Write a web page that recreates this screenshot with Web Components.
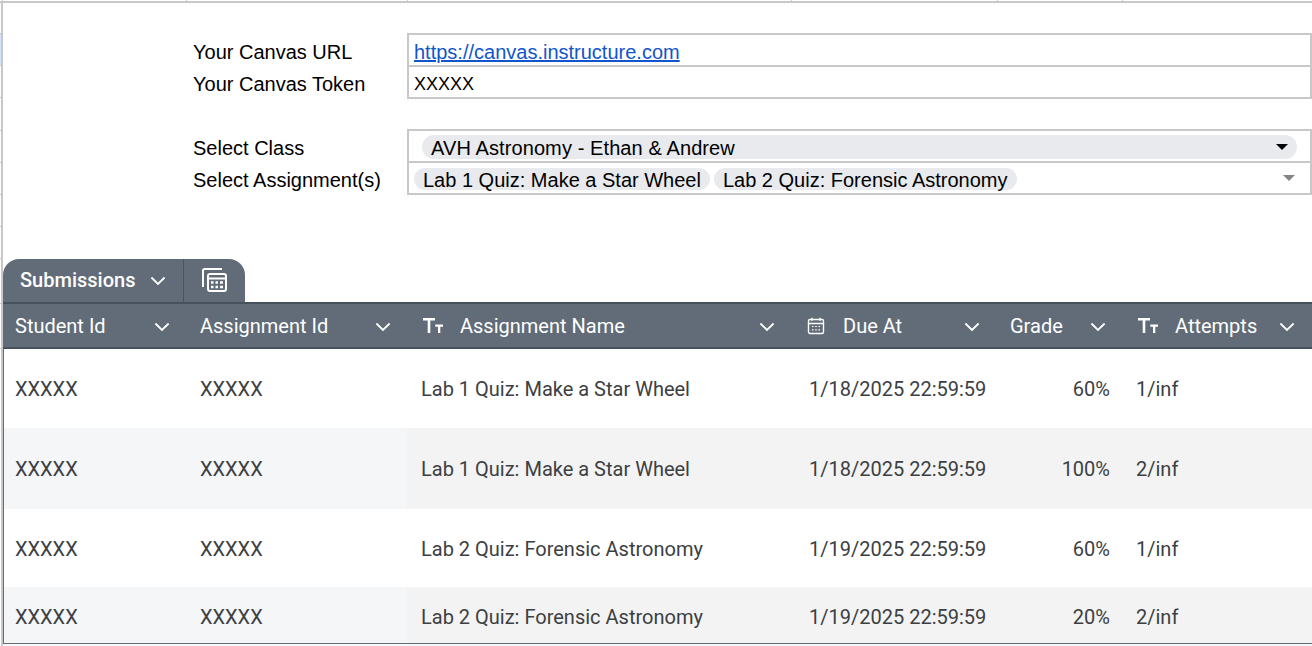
<!DOCTYPE html>
<html>
<head>
<meta charset="utf-8">
<title>Canvas Submissions</title>
<style>
    html, body { margin: 0; height: 100%; background: #fff; overflow: hidden; }
</style>
</head>
<body>
<sheet-page>
    <form-panel></form-panel>
    <submissions-table></submissions-table>
</sheet-page>
<script>
const CHEVRON = `<svg class="chev" width="16" height="14" viewBox="0 0 16 14"><path d="M1.400 3.500 8 10l6.600-6.500" fill="none" stroke="#fff" stroke-width="1.800"/></svg>`;
const TEXT_ICON = `<svg width="22" height="16" viewBox="0 0 22 16"><path d="M1 0h12v2.400H8.300V15H5.700V2.400H1zM13.300 6.500H21v2.200h-2.700V15H16V8.700h-2.700z" fill="#fff"/></svg>`;
const CAL_ICON = `<svg width="18" height="18" viewBox="0 0 18 18" fill="none" stroke="#fff"><rect x="1.500" y="2.500" width="15" height="14" rx="1.500" stroke-width="1.400"/><path d="M1.500 6.500h15M5 .8v3M13 .8v3" stroke-width="1.400"/><path d="M5 9.500h1.600M8.200 9.500h1.600M11.400 9.500H13M5 12.800h1.600M8.200 12.800h1.600M11.400 12.800H13" stroke-width="1.200"/></svg>`;
const TABLE_ICON = `<svg width="26" height="26" viewBox="0 0 26 26" fill="none" stroke="#fff"><path d="M2 20V3.500Q2 2 3.500 2H21" stroke-width="2"/><rect x="7" y="7" width="18" height="17" rx="2" stroke-width="2"/><path d="M7.500 11.500h17" stroke-width="2"/><path d="M10 15.500h2.500M14.500 15.500H17M19 15.500h3M10 20h2.500M14.500 20H17M19 20h3" stroke-width="2.500"/></svg>`;

// row heights of the sheet behind the page, read from the ticks on the left edge
const SHEET_ROWS = [31, 32, 32, 33, 32, 32, 32, 32, 45, 45];

class SheetPage extends HTMLElement {
    constructor() {
        super();
        const shadow = this.attachShadow({ mode: 'open' });
        const ticks = SHEET_ROWS.map((h, i) =>
            `<div class="tick${i === 1 ? ' sel' : ''}" style="height:${h - 1}px"></div>`).join('');
        shadow.innerHTML = `
            <style>
                :host { display: block; height: 646px; overflow: hidden; }
                .ticks { display: grid; grid-template-columns: 3px 184px 221px 384px 206px 125px 1fr; height: 1px; }
                .ticks div { border-right: 1px solid #c8c8c8; }
                .line { height: 2px; background: #c8c8c8; }
                .main { display: grid; grid-template-columns: 1px 2px 1fr; height: 643px; }
                .tick { border-bottom: 1px solid #c8c8c8; }
                .sel { background: #d3e3fd; }
                .rule { background: #c8c8c8; }
                .content { min-width: 0; display: flex; flex-direction: column; }
            </style>
            <div class="ticks"><div></div><div></div><div></div><div></div><div></div><div></div></div>
            <div class="line"></div>
            <div class="main">
                <div>${ticks}</div>
                <div class="rule"></div>
                <div class="content"><slot></slot></div>
            </div>
        `;
    }
}

class FormPanel extends HTMLElement {
    constructor() {
        super();
        const shadow = this.attachShadow({ mode: 'open' });
        shadow.innerHTML = `
            <style>
                :host {
                    display: block;
                    height: 256px;
                    padding: 30px 0 0 190px;
                    box-sizing: border-box;
                    font: 20px/32px "Liberation Sans", Arial, sans-serif;
                    color: #000;
                }
                .group { display: grid; grid-template-columns: 214px 1fr; margin-bottom: 30px; }
                .label { height: 32px; line-height: 38px; }
                .cell {
                    height: 32px;
                    box-sizing: border-box;
                    border: 2px solid #c8c8c8;
                    border-bottom: 0;
                    display: flex;
                    align-items: center;
                    padding: 4px 0 0 5px;
                    gap: 4px;
                    position: relative;
                    white-space: nowrap;
                }
                .last { height: 34px; border-bottom: 2px solid #c8c8c8; }
                .token { font-size: 18px; }
                a { color: #1155cc; text-decoration: underline; }
                .chip { background: #e8eaed; border-radius: 12px; height: 22px; line-height: 25px; padding: 0 9px; margin-bottom: 2px; }
                .wide { height: 24px; flex: 1; margin: 0 13px 2px 8px; display: flex; justify-content: space-between; align-items: center; letter-spacing: .1px; }
                .txt { padding-top: 2px; }
                .arrow { width: 0; height: 0; border: 6px solid transparent; border-bottom: 0; border-top-color: #000; }
                .grey { border-top-color: #858585; position: absolute; right: 15px; top: 12px; }
            </style>
            <div class="group">
                <div class="label">Your Canvas URL</div>
                <div class="cell"><a href="#">https://canvas.instructure.com</a></div>
                <div class="label">Your Canvas Token</div>
                <div class="cell last token">XXXXX</div>
            </div>
            <div class="group">
                <div class="label">Select Class</div>
                <div class="cell"><div class="chip wide"><span class="txt">AVH Astronomy - Ethan &amp; Andrew</span><span class="arrow"></span></div></div>
                <div class="label">Select Assignment(s)</div>
                <div class="cell last">
                    <div class="chip">Lab 1 Quiz: Make a Star Wheel</div>
                    <div class="chip">Lab 2 Quiz: Forensic Astronomy</div>
                    <span class="arrow grey"></span>
                </div>
            </div>
        `;
    }
}

const COLUMNS = [
    { name: 'Student Id' },
    { name: 'Assignment Id' },
    { name: 'Assignment Name', icon: TEXT_ICON, cls: 'tt' },
    { name: 'Due At', icon: CAL_ICON, cls: 'cal' },
    { name: 'Grade' },
    { name: 'Attempts', icon: TEXT_ICON, cls: 'tt' }
];

const ROWS = [
    ['XXXXX', 'XXXXX', 'Lab 1 Quiz: Make a Star Wheel', '1/18/2025 22:59:59', '60%', '1/inf'],
    ['XXXXX', 'XXXXX', 'Lab 1 Quiz: Make a Star Wheel', '1/18/2025 22:59:59', '100%', '2/inf'],
    ['XXXXX', 'XXXXX', 'Lab 2 Quiz: Forensic Astronomy', '1/19/2025 22:59:59', '60%', '1/inf'],
    ['XXXXX', 'XXXXX', 'Lab 2 Quiz: Forensic Astronomy', '1/19/2025 22:59:59', '20%', '2/inf']
];

class SubmissionsTable extends HTMLElement {
    constructor() {
        super();
        const shadow = this.attachShadow({ mode: 'open' });
        const head = COLUMNS.map(c => `
            <div class="th">
                ${c.icon ? `<span class="ico ${c.cls}">${c.icon}</span>` : ''}
                <span class="name">${c.name}</span>
                ${CHEVRON}
            </div>`).join('');
        const body = ROWS.map((r, i) => `
            <div class="tr h${i}">
                ${r.map((v, j) => `<div class="td c${j}">${v}</div>`).join('')}
            </div>`).join('');
        shadow.innerHTML = `
            <style>
                :host {
                    display: block;
                    font: 20px Roboto, sans-serif;
                    color: #3c4043;
                }
                .tabs {
                    display: flex;
                    width: 242px;
                    height: 43px;
                    background: #616c78;
                    border-radius: 16px 16px 0 0;
                    color: #fff;
                    font-weight: 500;
                }
                .tab { display: flex; align-items: center; width: 181px; box-sizing: border-box; padding: 0 17px 2px 17px; justify-content: space-between; border-right: 1px solid #4b555f; }
                .tab .chev { margin-top: 3px; }
                .calc { flex: 1; display: flex; align-items: center; justify-content: center; padding: 0 2px 2px 0; }
                .tr, .thead { display: grid; grid-template-columns: 185px 219px 388px 201px 126px 1fr; }
                .thead {
                    height: 47px;
                    box-sizing: border-box;
                    background: #616c78;
                    border-top: 2px solid #48525c;
                    border-bottom: 2px solid #48525c;
                    color: #fff;
                }
                .th { display: flex; align-items: center; padding: 0 17px 0 12px; min-width: 0; }
                .th:nth-child(1) { padding-right: 18px; }
                .th:nth-child(2), .th:nth-child(4), .th:nth-child(5) { padding-right: 16px; }
                .th:nth-child(3) { padding-right: 20px; }
                .th:nth-child(5) { padding-left: 14px; }
                .th .name { flex: 1; white-space: nowrap; }
                .th .chev { margin-top: 2px; }
                .ico { display: flex; flex: none; }
                .tt { width: 38px; margin-left: 3px; }
                .cal { width: 36px; }
                .td { display: flex; align-items: center; padding-left: 12px; white-space: nowrap; }
                .c0 { padding-left: 11px; border-left: 1px solid #5f6b77; }
                .c2, .c3, .c5 { padding-left: 14px; }
                .c4 { justify-content: flex-end; padding: 0 12px 0 0; }
                .h0 { height: 79px; }
                .h1 { height: 81px; }
                .h2 { height: 78px; }
                .h2 .td { padding-top: 1px; }
                .h3 { height: 56px; }
                .h3 .td { padding-top: 4px; }
                .h1, .h3 { background: #f5f6f8; }
                .h1 .td:nth-child(n+3), .h3 .td:nth-child(n+3) { background: #f3f3f3; }
                .tbody { border-bottom: 1px solid #5f6b77; }
                .foot { height: 2px; background: #f8f8f8; }
            </style>
            <div class="tabs">
                <div class="tab"><span>Submissions</span>${CHEVRON}</div>
                <div class="calc">${TABLE_ICON}</div>
            </div>
            <div class="thead">${head}</div>
            <div class="tbody">${body}</div>
            <div class="foot"></div>
        `;
    }
}

customElements.define('sheet-page', SheetPage);
customElements.define('form-panel', FormPanel);
customElements.define('submissions-table', SubmissionsTable);
</script>
</body>
</html>
